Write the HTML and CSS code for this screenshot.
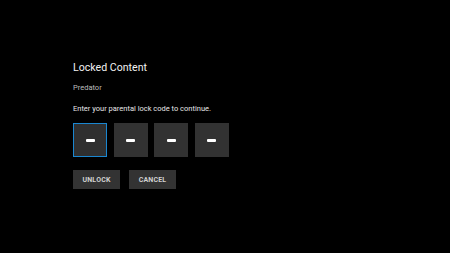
FILE: index.html
```html
<!DOCTYPE html>
<html lang="en">
<head>
  <meta charset="UTF-8" />
  <title>Locked Content</title>
  <link rel="stylesheet" href="styles.css">
</head>
<body>
  <div class="dialog">
    <h1 class="title">Locked Content</h1>
    <div class="subtitle">Predator</div>
    <p class="prompt">Enter your parental lock code to continue.</p>
    <div class="pin">
      <div class="digit focused"><span class="dash"></span></div>
      <div class="digit"><span class="dash"></span></div>
      <div class="digit"><span class="dash"></span></div>
      <div class="digit"><span class="dash"></span></div>
    </div>
    <div class="actions">
      <button class="btn">UNLOCK</button>
      <button class="btn">CANCEL</button>
    </div>
  </div>
</body>
</html>
```

FILE: styles.css
```css
html, body {
  margin: 0;
  height: 100%;
  background: #000;
}

body {
  font-family: Roboto, 'Liberation Sans', sans-serif;
  color: #fff;
}

.dialog {
  display: flex;
  flex-direction: column;
  padding: 60px 0 0 73px;
}

.title {
  margin: 0;
  font-size: 10.6px;
  font-weight: 400;
  line-height: 15px;
  color: #f2f2f2;
}

.subtitle {
  margin-top: 8px;
  font-size: 7.5px;
  line-height: 10px;
  color: #bdbdbd;
}

.prompt {
  margin: 11px 0 0;
  font-size: 7.5px;
  line-height: 10px;
  color: #e6e6e6;
}

.pin {
  display: flex;
  gap: 6.5px;
  margin-top: 9px;
}

.digit {
  width: 34px;
  height: 34px;
  box-sizing: border-box;
  background: #323232;
  border: 1.5px solid transparent;
  display: flex;
  justify-content: center;
  align-items: center;
}

.digit.focused {
  border-color: #1a86d0;
  background: #2f2f2f;
}

.dash {
  width: 9px;
  height: 3px;
  background: #fff;
  border-radius: 1px;
}

.actions {
  display: flex;
  gap: 9px;
  margin-top: 13px;
}

.btn {
  width: 47px;
  height: 19px;
  padding: 0;
  border: none;
  background: #333;
  color: #d0d0d0;
  font-family: Roboto, 'Liberation Sans', sans-serif;
  font-size: 7px;
  font-weight: 700;
  letter-spacing: 0.2px;
}
```
